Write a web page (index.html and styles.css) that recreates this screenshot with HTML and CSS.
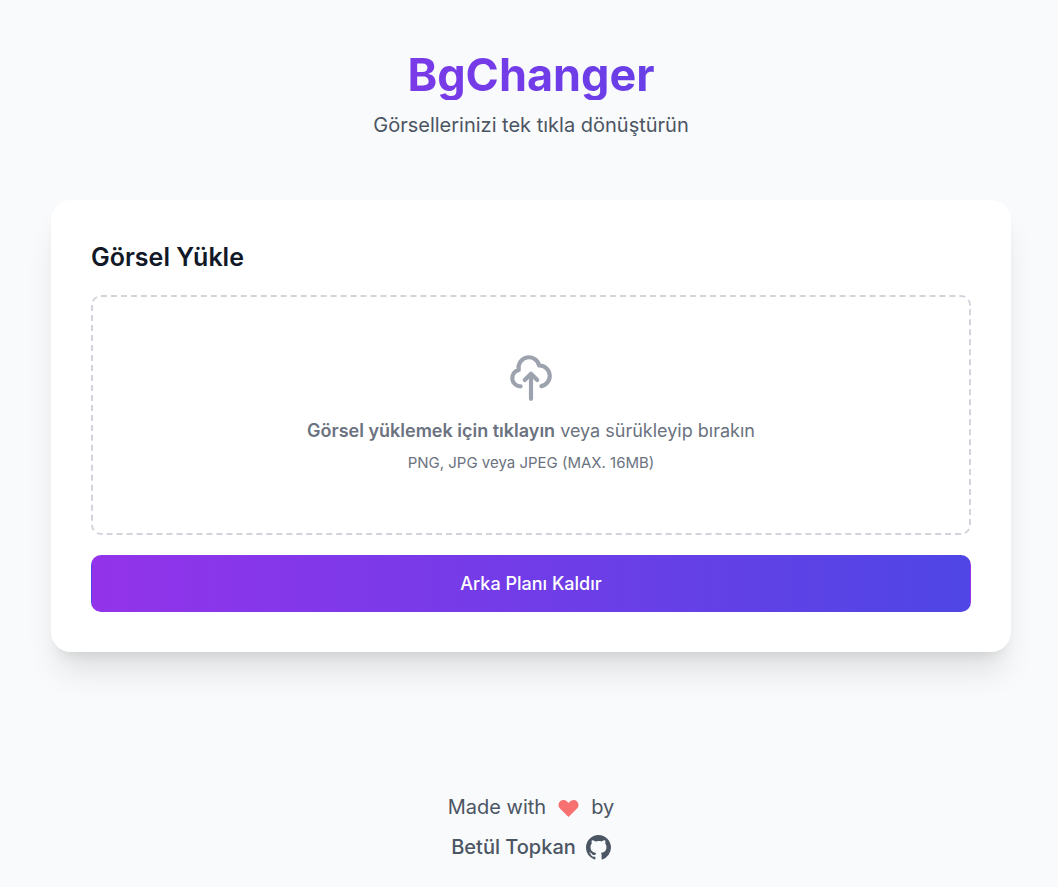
FILE: index.html
```html
<!DOCTYPE html>
<html lang="tr">
<head>
<meta charset="utf-8">
<meta name="viewport" content="width=device-width, initial-scale=1">
<title>BgChanger</title>
<link rel="stylesheet" href="styles.css">
</head>
<body>
<div class="page">
  <header class="header">
    <h1 class="title">BgChanger</h1>
    <p class="subtitle">Görsellerinizi tek tıkla dönüştürün</p>
  </header>
  <main class="card">
    <form class="form">
      <h2 class="heading">Görsel Yükle</h2>
      <label class="dropzone" for="file">
        <svg class="upload" viewBox="0 0 24 24" fill="none" stroke="currentColor" stroke-width="2" stroke-linecap="round" stroke-linejoin="round" aria-hidden="true"><path d="M7 16a4 4 0 0 1-.88-7.903A5 5 0 1 1 15.900 6L16 6a5 5 0 0 1 1 9.900M15 13l-3-3m0 0l-3 3m3-3v12"/></svg>
        <span class="prompt"><strong class="strong">Görsel yüklemek için tıklayın</strong> veya sürükleyip bırakın</span>
        <span class="hint">PNG, JPG veya JPEG (MAX. 16MB)</span>
        <input class="file" id="file" type="file" accept="image/png,image/jpeg">
      </label>
      <button class="submit" type="submit">Arka Planı Kaldır</button>
    </form>
  </main>
  <footer class="footer">
    <p class="credit">Made with
      <svg class="heart" viewBox="0 0 20 20" fill="currentColor" aria-hidden="true"><path fill-rule="evenodd" d="M3.172 5.172a4 4 0 0 1 5.656 0L10 6.343l1.172-1.171a4 4 0 1 1 5.656 5.656L10 17.657l-6.828-6.829a4 4 0 0 1 0-5.656z"/></svg>
      by</p>
    <a class="author" href="#">Betül Topkan
      <svg class="github" viewBox="2 2 20 20" fill="currentColor" aria-hidden="true"><path fill-rule="evenodd" d="M12 2C6.477 2 2 6.484 2 12.017c0 4.425 2.865 8.180 6.839 9.504.5.092.682-.217.682-.483 0-.237-.008-.868-.013-1.703-2.782.605-3.369-1.343-3.369-1.343-.454-1.158-1.110-1.466-1.110-1.466-.908-.62.069-.608.069-.608 1.003.070 1.531 1.032 1.531 1.032.892 1.530 2.341 1.088 2.910.832.092-.647.350-1.088.636-1.338-2.220-.253-4.555-1.113-4.555-4.951 0-1.093.390-1.988 1.029-2.688-.103-.253-.446-1.272.098-2.650 0 0 .840-.270 2.750 1.026A9.564 9.564 0 0 1 12 6.844c.850.004 1.705.115 2.504.337 1.909-1.296 2.747-1.027 2.747-1.027.546 1.379.202 2.398.100 2.651.640.700 1.028 1.595 1.028 2.688 0 3.848-2.339 4.695-4.566 4.943.359.309.678.920.678 1.855 0 1.338-.012 2.419-.012 2.747 0 .268.180.580.688.482A10.019 10.019 0 0 0 22 12.017C22 6.484 17.522 2 12 2z"/></svg>
    </a>
  </footer>
</div>
</body>
</html>
```
FILE: styles.css
```css
* {
  box-sizing: border-box;
}

body {
  margin: 0;
  background: #f9fafb;
  color: #4b5563;
  font-family: Inter, "Liberation Sans", sans-serif;
}

.page {
  padding: 50px 47px 20px 51px;
}

.header {
  display: flex;
  flex-direction: column;
  gap: 10px;
  margin-bottom: 60px;
  text-align: center;
}

.title {
  margin: 0;
  background: linear-gradient(to right, #9333ea, #4f46e5);
  background-clip: text;
  -webkit-background-clip: text;
  color: transparent;
  font-size: 45px;
  line-height: 50px;
  font-weight: 700;
}

.subtitle {
  margin: 0;
  font-size: 20px;
  line-height: 30px;
}

.card {
  max-width: 960px;
  margin: 0 auto;
  padding: 40px;
  border-radius: 20px;
  background: #fff;
  box-shadow: 0 25px 31px -6px rgba(0, 0, 0, 0.1), 0 10px 13px -8px rgba(0, 0, 0, 0.1);
}

.form {
  display: flex;
  flex-direction: column;
  gap: 20px;
}

.heading {
  margin: 0;
  color: #111827;
  font-size: 25px;
  line-height: 35px;
  font-weight: 600;
}

.dropzone {
  position: relative;
  display: flex;
  flex-direction: column;
  align-items: center;
  justify-content: center;
  min-height: 240px;
  padding: 20px 20px 24px;
  border: 2px dashed #d1d5db;
  border-radius: 10px;
  color: #6b7280;
  text-align: center;
  cursor: pointer;
}

.upload {
  width: 50px;
  height: 50px;
  margin-bottom: 15px;
  color: #9ca3af;
}

.prompt {
  margin-bottom: 10px;
  font-size: 18px;
  line-height: 25px;
}

.strong {
  font-weight: 600;
}

.hint {
  font-size: 15px;
  line-height: 20px;
}

.file {
  position: absolute;
  width: 1px;
  height: 1px;
  opacity: 0;
}

.submit {
  padding: 15px 20px;
  border: 1px solid transparent;
  border-radius: 10px;
  background: linear-gradient(to right, #9333ea, #4f46e5);
  color: #fff;
  font: 500 18px/25px Inter, "Liberation Sans", sans-serif;
  cursor: pointer;
}

.footer {
  display: flex;
  flex-direction: column;
  align-items: center;
  gap: 10px;
  margin-top: 140px;
  font-size: 20px;
  line-height: 30px;
}

.credit,
.author {
  display: flex;
  align-items: center;
  gap: 10px;
  margin: 0;
}

.author {
  color: inherit;
  font-weight: 500;
  text-decoration: none;
}

.heart {
  width: 25px;
  height: 25px;
  color: #f87171;
}

.github {
  width: 25px;
  height: 25px;
}
```
